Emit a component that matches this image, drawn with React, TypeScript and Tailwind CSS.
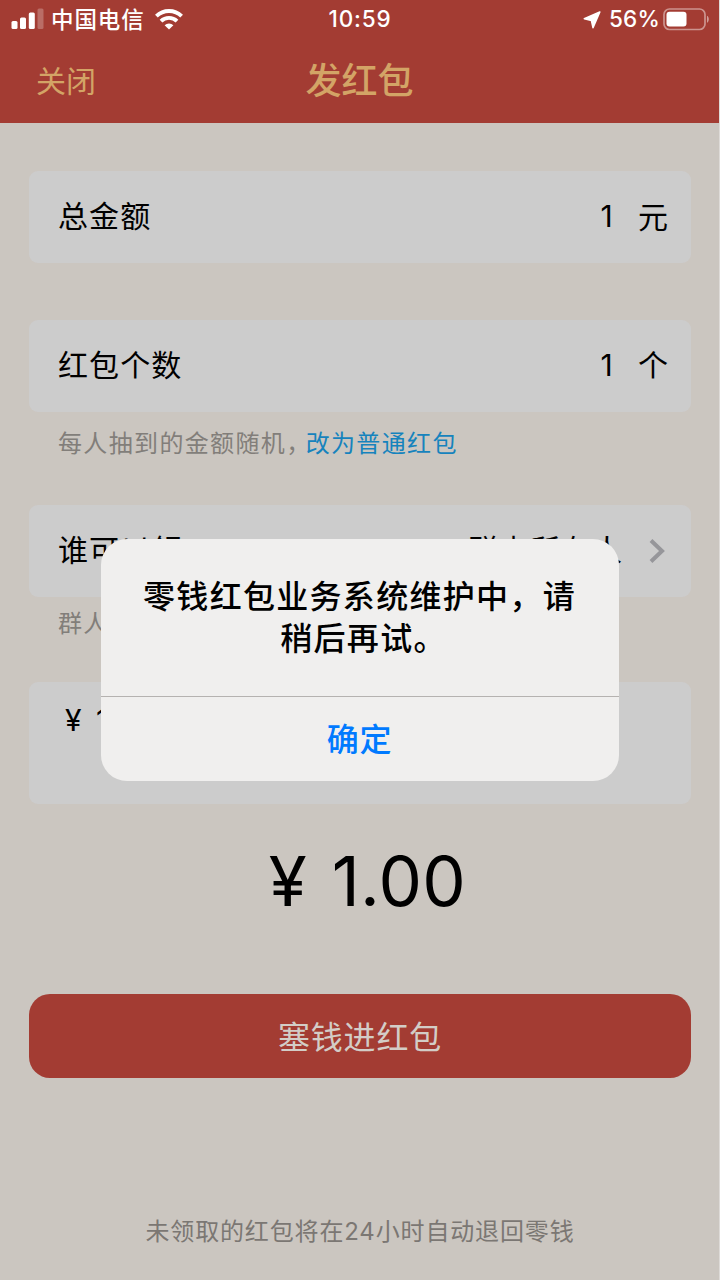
import type { ReactNode } from "react";

function SignalIcon() {
  return (
    <svg width="33" height="22" viewBox="0 0 33 22" fill="#fff">
      <rect x="0.5" y="13" width="6" height="8" rx="1.5" />
      <rect x="9" y="9.5" width="6" height="11.5" rx="1.5" />
      <rect x="17.8" y="4.5" width="6" height="16.5" rx="1.5" />
      <rect x="26.5" y="0.5" width="6" height="20.5" rx="1.5" opacity="0.25" />
    </svg>
  );
}

function WifiIcon() {
  return (
    <svg width="28" height="22" viewBox="0 0 28 22" fill="none" stroke="#fff" strokeWidth="3.9">
      <path d="M1.4 8.2a18 18 0 0 1 25.2 0" />
      <path d="M6 13.1a11.6 11.6 0 0 1 16 0" />
      <path d="M14 21.6l-4.4-4.4a6.3 6.3 0 0 1 8.8 0z" fill="#fff" stroke="none" />
    </svg>
  );
}

function LocationIcon() {
  return (
    <svg
      width="18"
      height="18"
      viewBox="0 0 18 18"
      fill="#fff"
      stroke="#fff"
      strokeWidth="1.6"
      strokeLinejoin="round"
    >
      <path d="M16.8 1 1.3 7.8 8.4 9.4l1.6 7.2z" />
    </svg>
  );
}

function BatteryIcon() {
  return (
    <svg width="47" height="23" viewBox="0 0 47 23" fill="none">
      <rect x="1" y="1" width="41" height="20.5" rx="5.5" stroke="#fff" strokeOpacity="0.45" strokeWidth="1.7" />
      <rect x="3.5" y="3.8" width="20" height="14.8" rx="3" fill="#fff" />
      <path d="M44 7.8c2.4 1.2 2.4 5.8 0 7z" fill="#fff" fillOpacity="0.5" />
    </svg>
  );
}

function StatusBar() {
  return (
    <div className="grid h-[38px] grid-cols-3 items-center text-[22.5px] font-medium text-white">
      <div className="flex items-center pl-[11px]">
        <SignalIcon />
        <span className="ml-[7px] pt-px tracking-[0.9px]">中国电信</span>
        <span className="ml-2.5">
          <WifiIcon />
        </span>
      </div>
      <div className="pl-px text-center tracking-[0.8px]">10:59</div>
      <div className="flex items-center justify-end pr-[9px]">
        <span className="pt-0.5">
          <LocationIcon />
        </span>
        <span className="mr-[3px] ml-2 tracking-[0.2px]">56%</span>
        <BatteryIcon />
      </div>
    </div>
  );
}

function Row({ label, children }: { label: string; children: ReactNode }) {
  return (
    <div className="flex h-[92px] items-center justify-between rounded-[9px] bg-[#cccccc] pr-[22px] pb-px pl-[29px] text-[30px] tracking-[1.1px] text-black">
      <span>{label}</span>
      <div className="flex items-center">{children}</div>
    </div>
  );
}

function Alert() {
  return (
    <div className="absolute inset-0 flex items-start justify-center pt-[539px]">
      <div className="flex h-[242px] w-[518px] flex-col overflow-hidden rounded-[26px] bg-[#f0efee]">
        <p className="flex-1 pt-[37px] text-center text-[32px] leading-[42px] font-medium tracking-[1.3px] text-black">
          零钱红包业务系统维护中，请
          <br />
          <span className="pl-2">稍后再试。</span>
        </p>
        <button className="h-[85px] border-t border-[#b5b2b0] pt-0.5 text-[32px] font-medium tracking-[0.7px] text-[#007aff]">
          确定
        </button>
      </div>
    </div>
  );
}

export default function App() {
  return (
    <div className="relative h-[1280px] w-[720px] overflow-hidden border-r border-[#dedbd8] bg-[#cbc6c0] font-[Inter,'Noto_Sans_CJK_SC',sans-serif]">
      <header className="h-[123px] bg-[#a33c33]">
        <StatusBar />
        <div className="grid h-[85px] grid-cols-3 items-center text-[#d3a466]">
          <span className="pt-0.5 pl-9 text-[30px]">关闭</span>
          <h1 className="text-center text-[36px] font-medium">发红包</h1>
        </div>
      </header>

      <main className="flex flex-col pt-12 pr-7 pl-[29px]">
        <Row label="总金额">
          <span className="mr-6">1</span>
          <span className="pt-0.5">元</span>
        </Row>

        <div className="mt-[57px]">
          <Row label="红包个数">
            <span className="mr-6">1</span>
            <span>个</span>
          </Row>
        </div>
        <p className="flex h-[62px] items-center pt-0.5 pl-[29px] text-[24px] tracking-[1.35px] text-[#827e7a]">
          每人抽到的金额随机
          <span className="tracking-[-4.5px]">，</span>
          <a className="text-[#1683bd]">改为普通红包</a>
        </p>

        <div className="mt-[31px]">
          <Row label="谁可以领">
            <span>群内所有人</span>
            <svg className="mt-px ml-[26px]" width="20" height="26" viewBox="0 0 20 26" fill="none" stroke="#96969a" strokeWidth="4">
              <path d="M2 2.5 13 13 2 23.5" />
            </svg>
          </Row>
        </div>
        <p className="flex h-[52px] items-center pt-0.5 pl-[29px] text-[24px] tracking-[1.3px] text-[#827e7a]">
          群人数共3人
        </p>

        <div className="mt-[33px] h-[122px] rounded-[9px] bg-[#cccccc] pt-4 pl-9 text-[30px] text-black [word-spacing:6px]">
          ¥ 1.00
        </div>

        <div className="flex h-[190px] items-center justify-center pb-[34px] pl-[15px] text-[69px] tracking-[0.3px] text-black [word-spacing:5px]">
          ¥ 1.00
        </div>

        <button className="h-[84px] rounded-[21px] bg-[#a33c33] pt-[3px] text-[32px] tracking-[0.8px] text-[#d3cdc7]">
          塞钱进红包
        </button>
        <p className="mt-[136px] text-center text-[24px] tracking-[0.85px] text-[#7b7773]">
          未领取的红包将在24小时自动退回零钱
        </p>
      </main>

      <Alert />
    </div>
  );
}
